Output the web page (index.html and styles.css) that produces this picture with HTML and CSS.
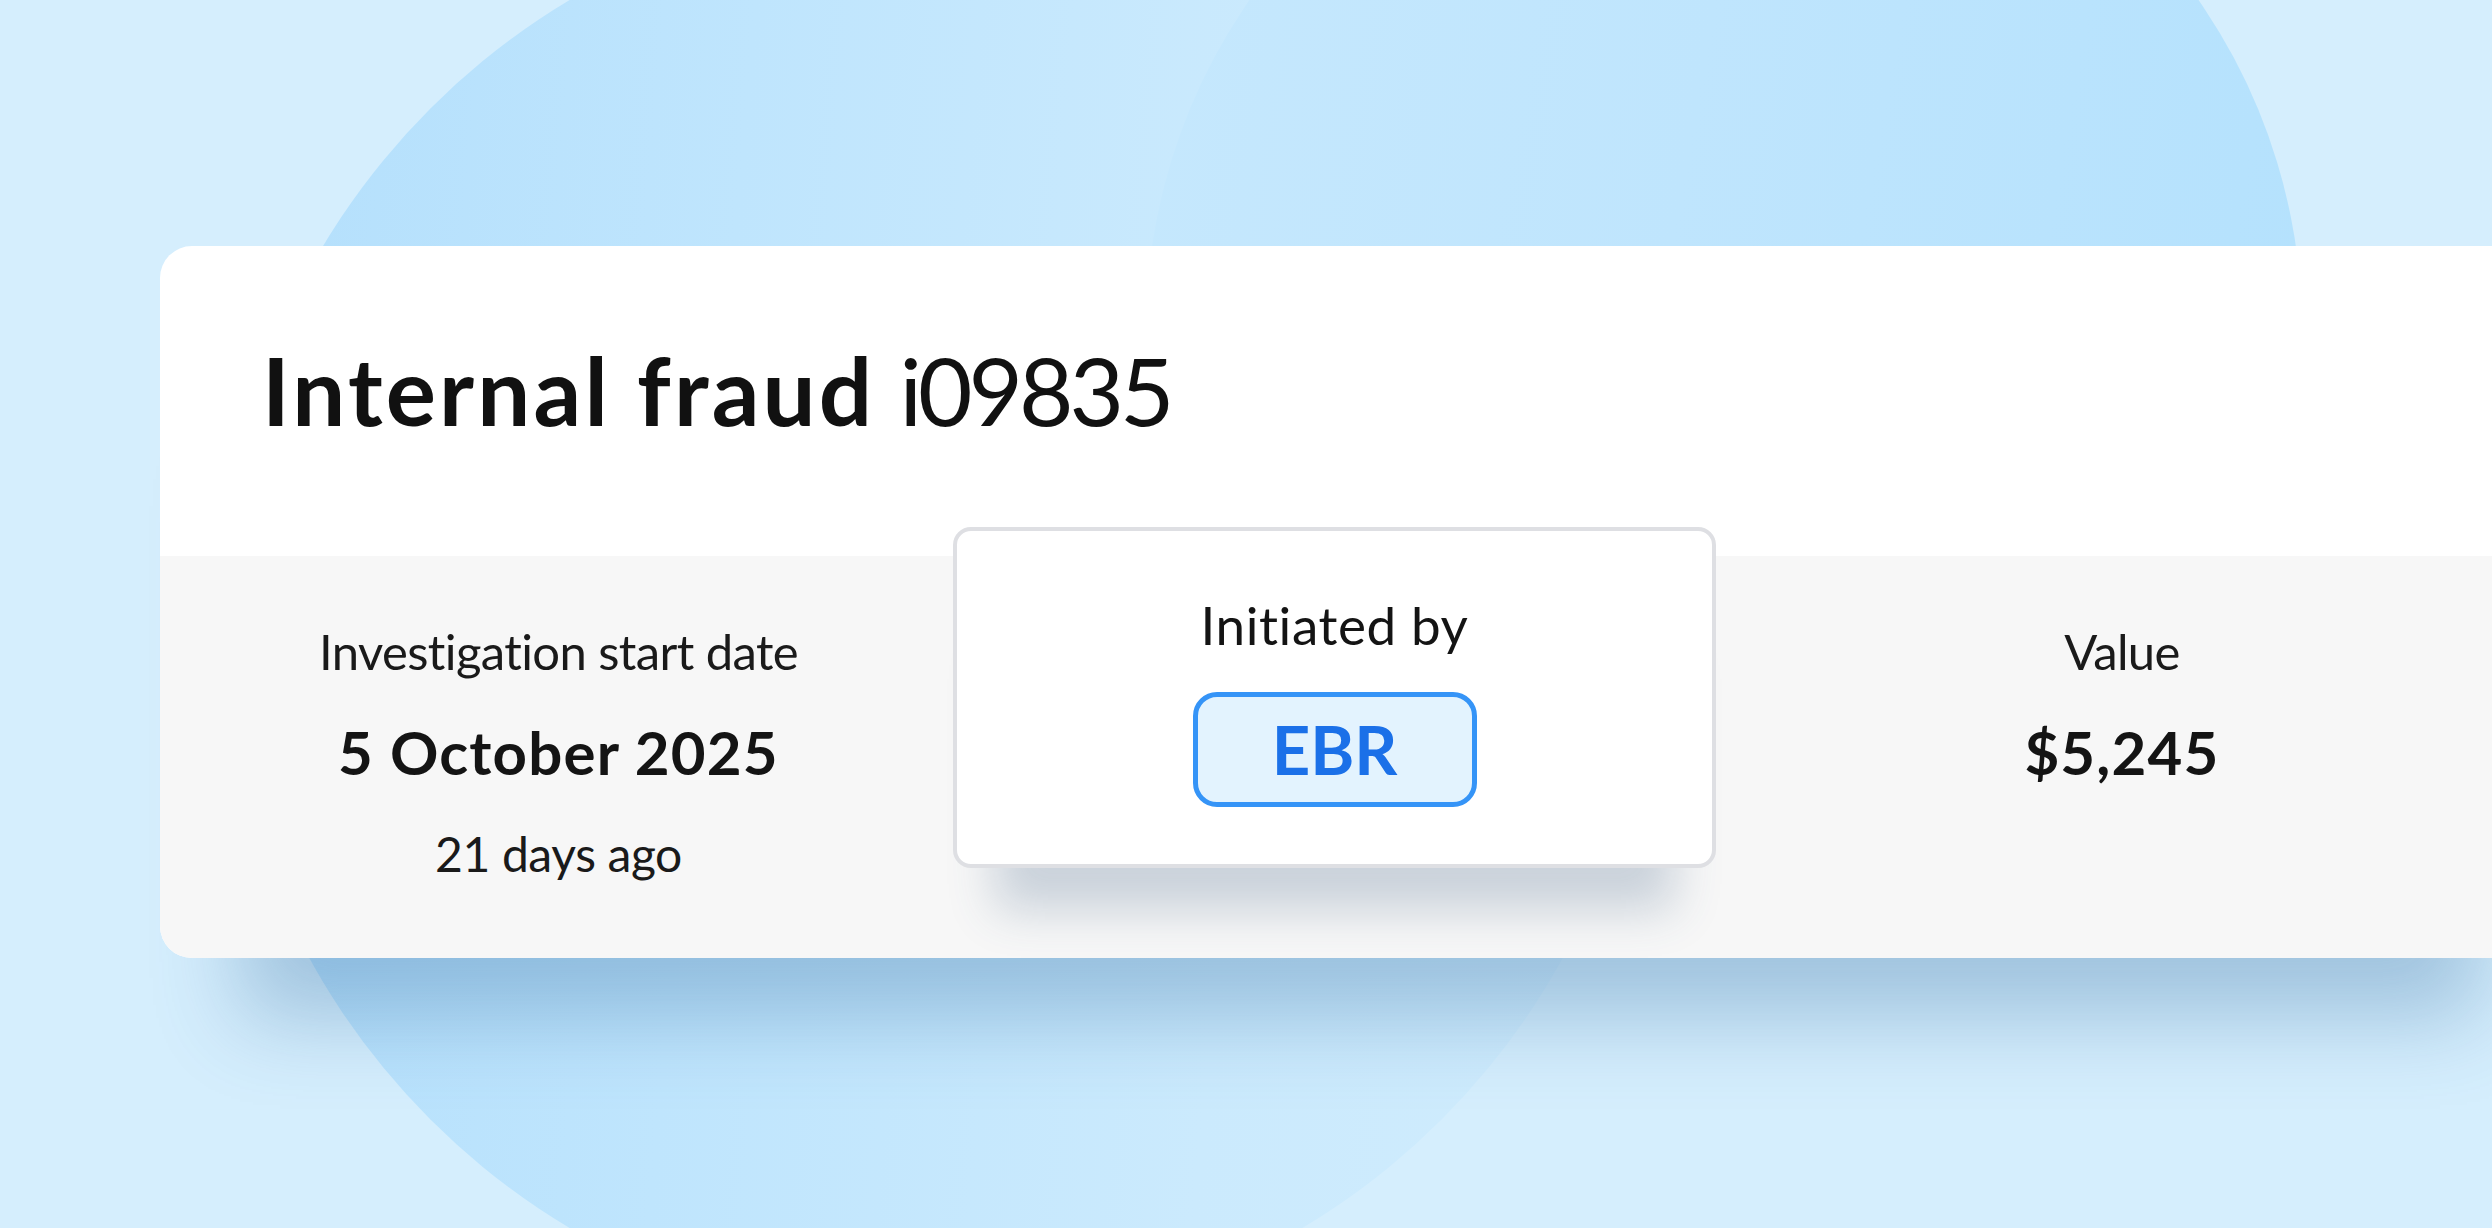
FILE: index.html
```html
<!DOCTYPE html>
<html lang="en">
<head>
<meta charset="utf-8">
<title>Internal fraud i09835</title>
<link rel="stylesheet" href="styles.css">
</head>
<body>
<div class="stage">
  <div class="blob blob-left"></div>
  <div class="blob blob-right"></div>
  <section class="card">
    <header class="card-head">
      <h1 class="title"><strong>Internal fraud</strong> <span class="case-id">i09835</span></h1>
    </header>
    <div class="card-body">
      <div class="stat">
        <div class="stat-label">Investigation start date</div>
        <div class="stat-value">5 October 2025</div>
        <div class="stat-sub">21 days ago</div>
      </div>
      <div class="stat stat-lifted">
        <div class="lifted-label">Initiated by</div>
        <div class="badge">EBR</div>
      </div>
      <div class="stat">
        <div class="stat-label">Value</div>
        <div class="stat-value">$5,245</div>
      </div>
    </div>
  </section>
</div>
</body>
</html>
```

FILE: styles.css
```css
html, body {
  margin: 0;
  padding: 0;
}

body {
  width: 2492px;
  height: 1228px;
  overflow: hidden;
  background: #d5eefd;
  font-family: "Lato", "Noto Sans", sans-serif;
  color: #141414;
}

.stage {
  position: relative;
  width: 2492px;
  height: 1228px;
  overflow: hidden;
  padding: 246px 0 0 160px;
  box-sizing: border-box;
}

.blob {
  position: absolute;
  border-radius: 50%;
}

.blob-left {
  left: 221px;
  top: -101px;
  width: 1430px;
  height: 1430px;
  background: linear-gradient(95deg, #b3dffc 0%, #bfe5fd 35%, #cbeafd 70%, #d0ecfd 100%);
}

.blob-right {
  left: 1146px;
  top: -248px;
  width: 1156px;
  height: 1156px;
  background: linear-gradient(100deg, #c6e8fd 0%, #bfe5fd 45%, #b3e1fd 100%);
}

.card {
  position: relative;
  width: 2400px;
  border-radius: 32px;
  background: #ffffff;
  box-shadow: 0 140px 80px -80px rgba(50, 105, 160, 0.32);
}

.card-head {
  height: 310px;
  padding: 97px 0 0 102px;
  box-sizing: border-box;
}

.title {
  margin: 0;
  font-size: 94px;
  line-height: 1;
  font-weight: 400;
  color: #111111;
}

.title strong {
  font-weight: 700;
  letter-spacing: 3.2px;
}

.case-id {
  letter-spacing: -4px;
}

.card-body {
  height: 402px;
  background: #f7f7f7;
  border-radius: 0 0 32px 32px;
  display: grid;
  grid-template-columns: 797px 759px 812px;
  align-items: start;
}

.stat {
  display: flex;
  flex-direction: column;
  align-items: center;
  text-align: center;
  padding-top: 71px;
}

.stat-label {
  font-size: 49px;
  line-height: 1;
  color: #1a1a1a;
  letter-spacing: -0.6px;
}

.stat-value {
  margin-top: 46px;
  font-size: 60px;
  line-height: 1;
  font-weight: 700;
  color: #141414;
  letter-spacing: 1.2px;
}

.stat-sub {
  margin-top: 48px;
  font-size: 48px;
  line-height: 1;
  color: #1a1a1a;
  letter-spacing: -0.4px;
}

.stat-lifted {
  position: relative;
  margin-top: -29px;
  margin-left: -4px;
  height: 341px;
  box-sizing: border-box;
  padding: 67px 0 0;
  background: #ffffff;
  border: 4px solid #dedfe3;
  border-radius: 18px;
  box-shadow: 0 84px 44px -42px rgba(60, 90, 130, 0.24);
}

.lifted-label {
  font-size: 53px;
  line-height: 1;
  color: #141414;
  letter-spacing: 0.6px;
}

.badge {
  margin-top: 41px;
  width: 284px;
  height: 115px;
  box-sizing: border-box;
  display: flex;
  align-items: center;
  justify-content: center;
  border: 5px solid #3594f7;
  border-radius: 24px;
  background: #e3f3fe;
  color: #1b70e8;
  font-size: 67px;
  font-weight: 700;
  line-height: 1;
}
```
